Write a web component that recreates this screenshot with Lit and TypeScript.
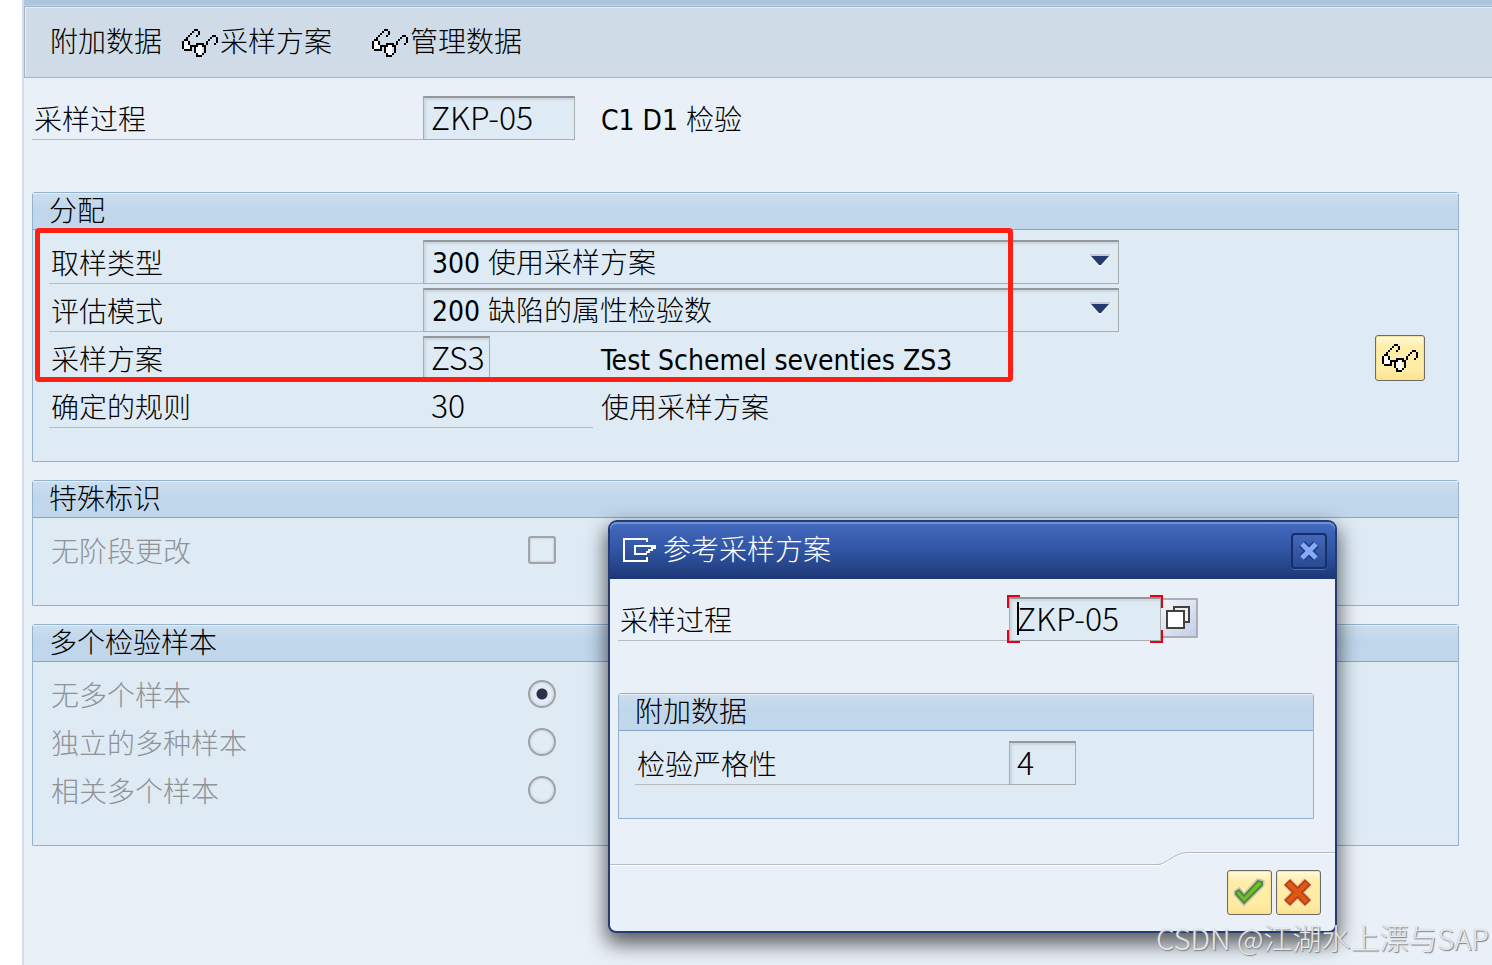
import { LitElement, html, svg, css } from "lit";
import { customElement, property } from "lit/decorators.js";

const GLASSES = [
  "......##..........",
  ".....#..#.........",
  "....#...#.........",
  "...#...#.......##.",
  "..#...........#..#",
  ".##..........#...#",
  "#oo#........#....#",
  "#oo#...####.#...#.",
  "#ooo####oo##......",
  "#ooo#.#ooo.#......",
  ".####.#ooo.#......",
  "......#ooo.#......",
  ".......#oo#.......",
  ".......###........",
];

@customElement("glasses-icon")
class GlassesIcon extends LitElement {
  static styles = css`
    :host { display: block; width: 36px; height: 28px; }
    svg { display: block; }
    .ink { fill: #000; }
    .lens { fill: #fff; }
  `;
  render() {
    return html`<svg width="36" height="28" viewBox="0 0 18 14" shape-rendering="crispEdges" aria-hidden="true">
      ${GLASSES.flatMap((row, y) =>
        [...row].map((cell, x) =>
          cell === "." ? null : svg`<rect class=${cell === "#" ? "ink" : "lens"} x=${x} y=${y} width="1" height="1"></rect>`
        )
      )}
    </svg>`;
  }
}

@customElement("field-group")
class FieldGroup extends LitElement {
  @property() heading = "";
  static styles = css`
    :host { display: block; box-sizing: border-box; border: 1px solid #93b2d0; border-radius: 3px 3px 0 0; background: #deebf5; }
    .heading {
      margin: 0; box-sizing: border-box; height: 37px; padding-left: 16px;
      font: inherit; line-height: 38px; border-bottom: 1px solid #86a5c9; box-shadow: inset 0 1px #e4edf6;
      background: linear-gradient(#ccdeef, #c0d6eb 45%, #c1d7ec);
    }
    .body { position: relative; display: flex; flex-direction: column; gap: 4px; padding: 10px 16px 33px; }
  `;
  render() {
    return html`<h2 class="heading">${this.heading}</h2><div class="body"><slot></slot></div>`;
  }
}

@customElement("app-root")
class AppRoot extends LitElement {
  static styles = css`
    :host {
      display: block; position: relative; min-height: 100vh; background: #fff; color: #000; overflow: hidden;
      font: 300 28px "DejaVu Sans Condensed", "Noto Sans CJK SC", sans-serif;
    }
    * { box-sizing: border-box; }
    button, input, select { font: inherit; color: inherit; margin: 0; padding: 0; border-radius: 0; }
    svg { display: block; }

    .screen { min-height: 100vh; margin-left: 22px; border-left: 2px solid #d5dbe9; background: #e9f0f7; }
    .strip { height: 6px; background: #afc4dd; border-bottom: 1px solid #c3d3e5; }
    .toolbar {
      display: flex; align-items: center; gap: 20px; height: 72px; padding: 2px 25px 0;
      border: 1px solid #a3b6c8; border-right: 0; background: #cfdce7; box-shadow: inset 1px 1px #e6edf4;
    }
    .tool { display: flex; align-items: center; gap: 2px; height: 40px; border: 0; background: none; line-height: 44px; margin-right: 20px; }
    .tool.plain { margin-right: 0; }

    .form { padding: 18px 33px 0 8px; }
    .groups { display: flex; flex-direction: column; gap: 18px; margin-top: 52px; }
    .row { display: flex; align-items: stretch; height: 44px; }
    .label { flex: none; width: 374px; padding-left: 2px; line-height: 49px; border-bottom: 1px solid #b9bcbe; white-space: nowrap; }
    .label.wide { width: 391px; }
    .label.dim { width: 479px; border: 0; color: #8f9296; }
    .cell { flex: none; width: 170px; }
    .cell.lined { border-bottom: 1px solid #b9bcbe; }
    .note { margin-left: 8px; line-height: 49px; white-space: nowrap; }
    .field {
      display: block; height: 44px; padding: 0 0 0 8px; outline: 0; border: 1px solid #a9adb0; border-top: 2px solid #93979b;
      background: #deebf5; box-shadow: inset 2px 2px 2px #cbd6de; appearance: none;
    }
    .code { font: 300 32px "Noto Sans CJK SC", sans-serif; line-height: 36px; }
    .field.code { padding: 0 0 6px 7px; }
    .long { width: 152px; }
    .short { width: 67px; }
    .value { display: block; padding-left: 8px; line-height: 40px; }
    .pick { position: relative; flex: 0 1 696px; }
    .pick .field { width: 100%; padding-top: 2px; }
    .arrow { position: absolute; right: 7px; top: 14px; pointer-events: none; }

    .tick {
      align-self: center; flex: none; width: 28px; height: 28px; appearance: none; border: 2px solid #a0a3a7; background: #e2ecf5;
      box-shadow: inset 0 0 2px 1px #cdd5dc;
    }
    .tick.box { border-radius: 3px; }
    .tick.round { border-radius: 50%; }
    .tick.round:checked { background: radial-gradient(circle, #30304a 5px, #e2ecf5 6px); }

    .yellow {
      display: flex; align-items: center; justify-content: center; border: 1px solid #6e6a66; border-radius: 3px;
      background: linear-gradient(#fffbe0, #ffeda9 25%, #ffeda5 75%, #fbe28f); box-shadow: inset 0 0 0 1px #f6e09a;
    }
    .look { align-self: center; margin: 0 17px 0 auto; width: 50px; height: 46px; flex: none; }
    .mark { position: absolute; left: 2px; top: -2px; width: 978px; height: 154px; border: 5px solid #ff1f14; border-radius: 4px; pointer-events: none; }

    .dialog {
      position: absolute; left: 608px; top: 520px; width: 729px; border: 2px solid #243b73; border-radius: 9px 9px 8px 8px;
      background: #e9f0f7; box-shadow: 0 9px 20px 2px rgba(0, 0, 0, 0.62);
    }
    .title {
      display: flex; align-items: center; gap: 6px; height: 57px; padding: 0 8px 0 12px; color: #fff; border-radius: 7px 7px 0 0;
      background: linear-gradient(#456bc0, #3155a3 50%, #1d3775); box-shadow: inset 0 2px #6d92dc;
    }
    .name { margin: 0; font: inherit; flex: 1; line-height: 56px; }
    .close {
      width: 36px; height: 36px; padding: 0; display: grid; place-items: center; border: 2px solid #172f69; border-radius: 4px;
      background: linear-gradient(#4468b9, #294a94); box-shadow: 0 1px #4a6cb8;
    }
    .content { padding: 18px 21px 0 8px; }
    .content field-group { margin-top: 52px; }
    .focus { position: relative; flex: none; }
    .brackets { position: absolute; left: -2px; top: -2px; pointer-events: none; }
    .help {
      width: 37px; height: 40px; margin-top: 1px; padding-right: 2px; display: grid; place-items: center; border: 2px solid #aaaeb6; border-left: 0;
      background: linear-gradient(135deg, #f2f5fc, #c3cee8); border-radius: 0 2px 2px 0;
    }
    .foot { margin-top: 31px; }
    .curve { display: flex; }
    .edge { flex: 1; height: 15px; border-bottom: 1px solid #b1bfca; box-shadow: 0 1px #fff; }
    .actions { display: flex; justify-content: flex-end; gap: 4px; padding: 4px 14px 16px; }
    .act { width: 45px; height: 45px; }

    .credit {
      position: absolute; right: 3px; bottom: 7px; font: 300 29px "Noto Sans CJK SC", sans-serif; line-height: 42px; white-space: nowrap;
      color: rgba(255, 255, 255, 0.8); text-shadow: 1px 1px 1px #7d8288, 0 0 1px #9ba0a5;
    }
  `;

  private choice(id: string, label: string, value: string) {
    return html`<div class="row">
      <label class="label" for=${id}>${label}</label>
      <div class="pick">
        <select class="field" id=${id}><option>${value}</option></select>
        <svg class="arrow" width="22" height="16" viewBox="0 0 22 16" aria-hidden="true">
          <path d="M1 2h18l-9 12z" fill="#f4f7fb"></path>
          <path d="M0 0h20v2H0z" fill="#c5ccd8"></path>
          <path d="M1 2h18v2l-7 8h-4l-7-8z" fill="#f0f4f9"></path>
          <path d="M1 2h18l-8 9h-2z" fill="#233a70"></path>
        </svg>
      </div>
    </div>`;
  }

  private radio(id: string, label: string, checked = false) {
    return html`<div class="row">
      <label class="label dim" for=${id}>${label}</label>
      <input class="tick round" type="radio" name="samples" id=${id} .checked=${checked} disabled />
    </div>`;
  }

  render() {
    return html`
      <main class="screen">
        <div class="strip"></div>
        <div class="toolbar">
          <button class="tool plain">附加数据</button>
          <button class="tool"><glasses-icon></glasses-icon>采样方案</button>
          <button class="tool"><glasses-icon></glasses-icon>管理数据</button>
        </div>
        <div class="form">
          <div class="row">
            <label class="label wide" for="procedure">采样过程</label>
            <div class="cell"><input class="field code long" id="procedure" value="ZKP-05" readonly /></div>
            <span class="note">C1 D1 检验</span>
          </div>
          <div class="groups">
            <field-group heading="分配">
              ${this.choice("type", "取样类型", "300 使用采样方案")}
              ${this.choice("mode", "评估模式", "200 缺陷的属性检验数")}
              <div class="row">
                <label class="label" for="scheme">采样方案</label>
                <div class="cell"><input class="field code short" id="scheme" value="ZS3" readonly /></div>
                <span class="note">Test Schemel seventies ZS3</span>
                <button class="yellow look" aria-label="采样方案"><glasses-icon></glasses-icon></button>
              </div>
              <div class="row">
                <label class="label" for="rule">确定的规则</label>
                <div class="cell lined"><output class="code value" id="rule">30</output></div>
                <span class="note">使用采样方案</span>
              </div>
              <div class="mark"></div>
            </field-group>
            <field-group heading="特殊标识">
              <div class="row">
                <label class="label dim" for="stage">无阶段更改</label>
                <input class="tick box" type="checkbox" id="stage" disabled />
              </div>
            </field-group>
            <field-group heading="多个检验样本">
              ${this.radio("none", "无多个样本", true)}
              ${this.radio("independent", "独立的多种样本")}
              ${this.radio("dependent", "相关多个样本")}
            </field-group>
          </div>
        </div>
      </main>

      <section class="dialog" role="dialog" aria-labelledby="name">
        <header class="title">
          <svg width="35" height="28" viewBox="0 0 35 28" fill="none" stroke="#fff" stroke-width="2" shape-rendering="crispEdges" aria-hidden="true">
            <path d="M25 5V2H2v22h23v-4"></path>
            <path d="M34 9H13v8h12"></path>
            <path d="M24 15h3v-2h3v-2h3V9"></path>
          </svg>
          <h1 class="name" id="name">参考采样方案</h1>
          <button class="close" aria-label="关闭">
            <svg width="22" height="22" viewBox="0 0 22 22" aria-hidden="true">
              <path d="M4 4l14 14M18 4L4 18" stroke="#1e3a80" stroke-width="8"></path>
              <path d="M4 4l14 14M18 4L4 18" stroke="#86a9f8" stroke-width="5"></path>
            </svg>
          </button>
        </header>
        <div class="content">
          <div class="row">
            <label class="label wide" for="reference">采样过程</label>
            <div class="focus">
              <input class="field code long" id="reference" value="ZKP-05" />
              <svg class="brackets" width="156" height="48" viewBox="0 0 156 48" fill="none" shape-rendering="crispEdges" aria-hidden="true">
                <path d="M1 13V1h12M143 1h12v12M155 35v12h-12M13 47H1V35" stroke="#e60012" stroke-width="2"></path>
                <path d="M11 7v33" stroke="#000" stroke-width="2"></path>
              </svg>
            </div>
            <button class="help" aria-label="选择">
              <svg width="26" height="26" viewBox="0 0 26 26" stroke="#45403a" stroke-width="2" shape-rendering="crispEdges" aria-hidden="true">
                <path d="M9 2h15v15H9z" fill="#e9eef8"></path>
                <path d="M2 6h17v17H2z" fill="#fff"></path>
              </svg>
            </button>
          </div>
          <field-group heading="附加数据">
            <div class="row">
              <label class="label" for="severity">检验严格性</label>
              <input class="field code short" id="severity" value="4" readonly />
            </div>
          </field-group>
        </div>
        <footer class="foot">
          <div class="curve">
            <div class="edge"></div>
            <svg width="180" height="16" viewBox="0 0 180 16" fill="none" aria-hidden="true">
              <path d="M0 15.500h3q4 0 8-3l10-6q5-3 12-3h147" stroke="#fff"></path>
              <path d="M0 14.500h3q4 0 8-3l10-6q5-3 12-3h147" stroke="#a9bac9"></path>
            </svg>
          </div>
          <div class="actions">
            <button class="yellow act" aria-label="确定">
              <svg width="43" height="43" viewBox="1 1 43 43" aria-hidden="true">
                <path d="M9 22l3-2 5 6L31 11l4 1v3L17 33 9 24z" fill="none" stroke="#c9c6b0" stroke-width="5"></path>
                <path d="M9 22l3-2 5 6L31 11l4 1v3L17 33 9 24z" fill="#78bd22" stroke="#4c8a45" stroke-width="2"></path>
              </svg>
            </button>
            <button class="yellow act" aria-label="取消">
              <svg width="43" height="43" viewBox="1 1 43 43" fill="none" aria-hidden="true">
                <path d="M11 12l21 21M32 12L11 33" stroke="#d4b8a0" stroke-width="10"></path>
                <path d="M11 12l21 21M32 12L11 33" stroke="#b5391a" stroke-width="8"></path>
                <path d="M12 13l19 19M31 13L12 32" stroke="#dd5814" stroke-width="5"></path>
              </svg>
            </button>
          </div>
        </footer>
      </section>
      <div class="credit">CSDN @江湖水上漂与SAP</div>
    `;
  }
}
